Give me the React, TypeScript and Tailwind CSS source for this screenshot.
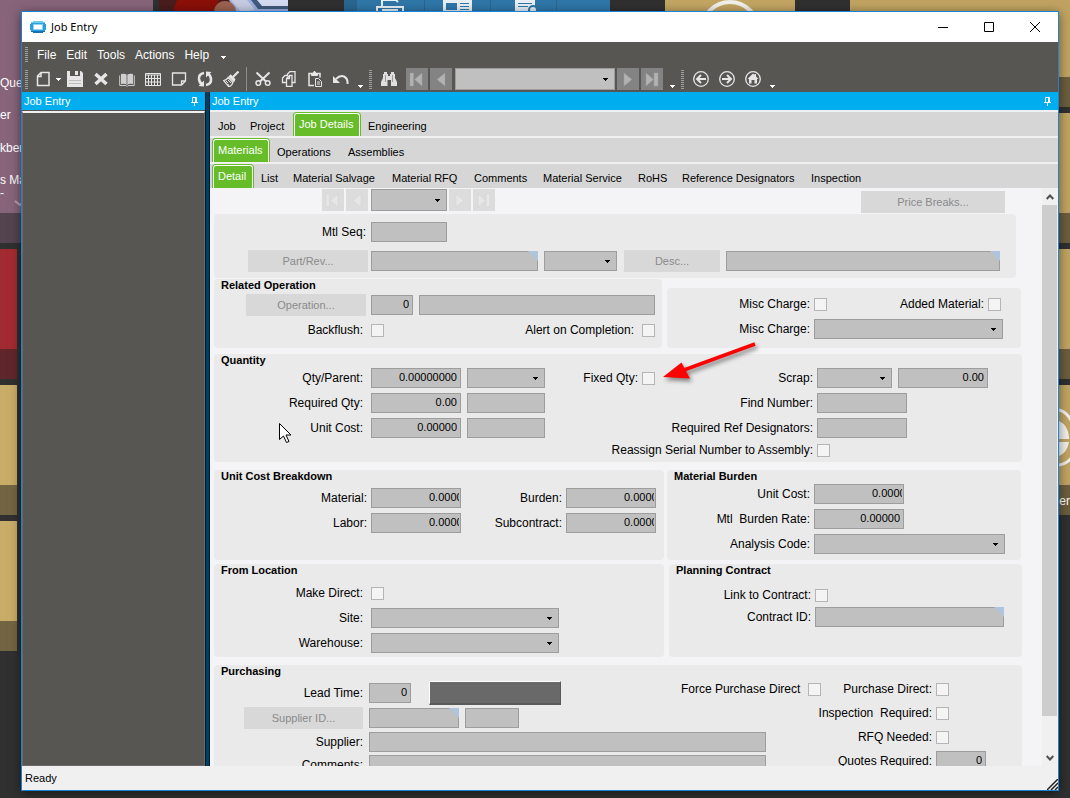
import type { ReactNode } from "react";
import clsx from "clsx";

const mainTabs = [
  { label: "Job", width: "w-[32px]" },
  { label: "Project", width: "w-[50px]" },
  { label: "Job Details", width: "w-[68px]", active: true },
  { label: "Engineering", width: "w-[78px]" },
];

const detailTabs = [
  { label: "Materials", width: "w-[58px]", active: true },
  { label: "Operations", width: "w-[71px]" },
  { label: "Assemblies", width: "w-[72px]" },
];

const materialTabs = [
  { label: "Detail", width: "w-[42px]", active: true },
  { label: "List", width: "w-[32px]" },
  { label: "Material Salvage", width: "w-[99px]" },
  { label: "Material RFQ", width: "w-[82px]" },
  { label: "Comments", width: "w-[69px]" },
  { label: "Material Service", width: "w-[95px]" },
  { label: "RoHS", width: "w-[44px]" },
  { label: "Reference Designators", width: "w-[129px]" },
  { label: "Inspection", width: "w-[70px]" },
];

type Tab = { label: string; width: string; active?: boolean };

function TabRow({ tabs, first }: { tabs: Tab[]; first?: boolean }) {
  return (
    <div
      role="tablist"
      className={clsx("mt-[2px] flex h-6 shrink-0 bg-[#d6d6d6]", first ? "pl-px" : "pl-[2px]")}
    >
      {tabs.map((t) => (
        <button
          key={t.label}
          role="tab"
          aria-selected={!!t.active}
          className={clsx(
            "h-full shrink-0 whitespace-nowrap text-left text-[11px]",
            t.width,
            t.active
              ? "rounded-t-[4px] bg-[#66bc29] px-px pt-px text-white"
              : "pl-[7px] pt-1 text-black"
          )}
        >
          {t.active ? (
            <span className="block h-full rounded-t-[3px] border border-b-0 border-white pl-[4px] leading-[20px]">
              {t.label}
            </span>
          ) : (
            t.label
          )}
        </button>
      ))}
    </div>
  );
}

function Group({ title, className, body, children }: {
  title?: string;
  className?: string;
  body?: string;
  children: ReactNode;
}) {
  return (
    <section className={clsx("relative rounded-[4px] bg-[#eaeaea]", className)}>
      {title && <h2 className="h-[13px] pl-[7px] text-[11px] font-bold leading-[13px]">{title}</h2>}
      <div className={body}>{children}</div>
    </section>
  );
}

const box = "border border-[#9d9d9d] bg-[#c0c0c0] text-[11px] text-black outline-none";

function Text({ name, className, value = "", search, cut }: {
  name?: string;
  className: string;
  value?: string;
  search?: boolean;
  cut?: boolean;
}) {
  return (
    <span className={clsx("relative block h-5 shrink-0", className)}>
      <input
        type="text"
        aria-label={name}
        defaultValue={value}
        className={clsx(box, "block h-full w-full pb-[3px]", cut ? "pl-[57px] pr-px text-left" : "pl-px pr-[3px] text-right")}
      />
      {search && (
        <svg className="absolute right-0 top-0" width="10" height="10" aria-hidden="true">
          <path d="M0 0h10v10z" fill="#b0c4de" />
        </svg>
      )}
    </span>
  );
}

function Combo({ name, className, height = "h-5" }: { name?: string; className: string; height?: string }) {
  return (
    <span className={clsx("relative block shrink-0", height, className)}>
      <select aria-label={name} className={clsx(box, "block h-full w-full appearance-none")} />
      <svg className="pointer-events-none absolute right-[7px] top-1/2 -mt-px" width="5" height="3" aria-hidden="true">
        <path d="M0 0h5v1H4v1H3v1H2V2H1V1H0z" fill="#000" />
      </svg>
    </span>
  );
}

function Check() {
  return (
    <input
      type="checkbox"
      className="size-[13px] shrink-0 appearance-none border border-[#b5b5b5] bg-[#f4f4f4] checked:bg-[#66bc29]"
    />
  );
}

// label text right-aligned in a column of its own, control after it
function Field({ label, labelWidth = "w-[149px]", gap = "gap-2", className, children }: {
  label: string;
  labelWidth?: string;
  gap?: string;
  className?: string;
  children: ReactNode;
}) {
  return (
    <label className={clsx("flex h-5 items-center", gap, className)}>
      <span className={clsx("shrink-0 whitespace-pre text-right", labelWidth)}>{label}</span>
      {children}
    </label>
  );
}

function GreyButton({ className, children }: { className: string; children: ReactNode }) {
  return (
    <button disabled className={clsx("h-[22px] shrink-0 bg-[#d8d8d8] text-[11px] text-[#8a8a8a]", className)}>
      {children}
    </button>
  );
}

const navPaths: Record<string, string> = {
  First: "M4 5h3.500v13H4zM16 5v13L8.500 11.500z",
  Previous: "M15 5v13L7 11.500z",
  Next: "M7 5v13l8-6.500z",
  Last: "M5 5v13l7.500-6.500zM13 5h4v13h-4z",
};

function NavButton({ kind, dark }: { kind: string; dark?: boolean }) {
  return (
    <button
      type="button"
      aria-label={kind}
      className={clsx("size-[22px] shrink-0", dark ? "bg-[#838383]" : "bg-[#dcdcdc]")}
    >
      <svg width="22" height="22" aria-hidden="true">
        <path d={navPaths[kind]} fill={dark ? "#b2b2b2" : "#e6e6e6"} stroke={dark ? "#9c9c9c" : "#d2d2d2"} strokeWidth=".5" />
      </svg>
    </button>
  );
}

function Gripper() {
  return (
    <svg width="3" height="19" className="shrink-0" aria-hidden="true">
      <path d="M1.5 0v19" stroke="#a0a0a0" strokeWidth="3" strokeDasharray="1 1" />
    </svg>
  );
}

function More({ className }: { className?: string }) {
  return (
    <svg width="5" height="3" className={clsx("shrink-0", className)} aria-hidden="true">
      <path d="M0 0h5v1H4v1H3v1H2V2H1V1H0z" fill="#fff" />
    </svg>
  );
}

function Tool({ name, children }: { name: string; children: ReactNode }) {
  return (
    <button aria-label={name} className="flex h-6 w-[26px] shrink-0 items-center justify-center">
      <svg width="16" height="16" viewBox="0 0 16 16" fill="none" stroke="#e6e6e6" aria-hidden="true">
        {children}
      </svg>
    </button>
  );
}

function Pin() {
  return (
    <svg width="7" height="9" viewBox="0 0 7 9" fill="none" stroke="#fff" aria-hidden="true">
      <path d="M1.5 5V.5h4V5M4.5 1v4M0 5.5h7M3.5 5v4" />
    </svg>
  );
}

function PanelHeader({ className }: { className?: string }) {
  return (
    <div className={clsx("flex h-[18px] shrink-0 items-center justify-between bg-[#00adef] pl-[2px] text-[11px] text-white", className)}>
      Job Entry
      <button aria-label="Pin panel">
        <Pin />
      </button>
    </div>
  );
}

function Tile({ className, band }: { className: string; band: string }) {
  return (
    <div className={clsx("absolute flex h-[130px] flex-col justify-end", className)}>
      <div className={clsx("h-[30px]", band)} />
    </div>
  );
}

function Desktop() {
  return (
    <div className="absolute inset-0 overflow-hidden text-[12px] text-white" aria-hidden="true">
      <div className="absolute left-0 top-0 h-[213px] w-[153px] bg-[#87647a]" />
      <div className="absolute left-0 top-[213px] h-[30px] w-[153px] bg-[#534450]" />
      <div className="absolute left-0 top-[75px] whitespace-nowrap">Que</div>
      <div className="absolute left-0 top-[107px] whitespace-nowrap">er</div>
      <div className="absolute left-0 top-[140px] whitespace-nowrap">kber</div>
      <div className="absolute left-0 top-[172px] whitespace-nowrap">s Ma</div>
      <div className="absolute left-0 top-[185px]">-</div>
      <svg className="absolute left-[14px] top-[200px]" width="12" height="8">
        <path d="M1 1l5 4 5-4" fill="none" stroke="#b9a5b2" strokeWidth="2" />
      </svg>
      <Tile className="left-0 top-[249px] w-[17px] bg-[#a22b31]" band="bg-[#60272b]" />
      <Tile className="left-0 top-[385px] w-[17px] bg-[#c8ac67]" band="bg-[#736543]" />
      <Tile className="left-0 top-[521px] w-[17px] bg-[#c8ac67]" band="bg-[#736543]" />

      <svg className="absolute left-[159px] top-0" width="129" height="12">
        <path d="M0 0h129v12H0z" fill="#4a1d1c" />
        <path d="M18 0h42l-6 12H14z" fill="#8a1008" />
        <path d="M70 0h59v12H76z" fill="#9fb0de" />
        <path d="M92 0h37v9h-30z" fill="#41597c" />
        <path d="M98 0h31v6h-26z" fill="#d5dcf2" />
        <path d="M72 0h16l8 10-14 2z" fill="#c6cbe2" />
        <circle cx="66" cy="12" r="11" fill="#9c6250" />
      </svg>
      <svg className="absolute left-[344px] top-0" width="266" height="12">
        <path d="M0 0h266v12H0z" fill="#2f77a8" />
        <path d="M0 0h13v12H0zM80 0h1v12h-1zM146 0h1v12h-1zM212 0h1v12h-1z" fill="#2a6690" />
        <path d="M38 7V0h14l2 2M33 12V7h26v5M38 10h16" fill="none" stroke="#e8f0f6" strokeWidth="2" />
        <path d="M99 0h29v12H99z" fill="#e8f0f6" />
        <path d="M102 3h11v7h-11zM116 3h9v1h-9zM116 6h9v1h-9zM116 9h9v1h-9z" fill="#2f77a8" />
        <path d="M171 0h20v12h-20z" fill="#e8f0f6" />
        <path d="M174 3h14v1h-14zM174 6h10v1h-10z" fill="#2f77a8" />
        <circle cx="189" cy="10" r="4" fill="#e8f0f6" stroke="#2f77a8" strokeWidth="2" />
      </svg>
      <div className="absolute left-[665px] top-0 h-3 w-[130px] bg-[#c2a562]" />
      <svg className="absolute left-[700px] top-0" width="60" height="12">
        <circle cx="30" cy="30" r="28" fill="none" stroke="#f2f0ea" strokeWidth="4" />
      </svg>
      <div className="absolute right-0 top-0 h-[77px] w-[220px] bg-[#c0a361]" />
      <div className="absolute right-0 top-[77px] h-[30px] w-[220px] bg-[#6b5e3d]" />
      <Tile className="right-0 top-[113px] w-[11px] bg-[#c0a361]" band="bg-[#6b5e3d]" />
      <Tile className="right-0 top-[249px] w-[11px] bg-[#c0a361]" band="bg-[#6b5e3d]" />
      <Tile className="right-0 top-[385px] w-[11px] bg-[#c0a361]" band="bg-[#6b5e3d]" />
      <svg className="absolute right-0 top-[405px]" width="11" height="66">
        <path d="M0 5q8 2 13 12M0 60q8-1 13-8" fill="none" stroke="#f2f0ea" strokeWidth="3" />
        <path d="M0 16q9 4 10 16v2H0zM0 37h10q-2 11-10 14z" fill="#f2f0ea" />
      </svg>
      <div className="absolute right-0 top-[493px] whitespace-nowrap">er</div>
    </div>
  );
}

function TitleBar() {
  return (
    <header className="flex h-[30px] shrink-0 items-center bg-white pl-2">
      <svg width="16" height="14" viewBox="0 0 16 14" aria-hidden="true">
        <path d="M3 1h10v1h2v2h1v6h-1v2h-2v1H3v-1H1v-2H0V4h1V2h2z" fill="#2a9fdc" />
        <path d="M3 1h10v1h2v1H1V2h2z" fill="#6ccbf2" />
        <path d="M1 11h14v1h-2v1H3v-1H1z" fill="#1670b4" />
        <path d="M3.500 4.500h9v5h-9z" fill="#fff" stroke="#8fd4f3" />
      </svg>
      <h1 className="ml-[5px] font-['Noto_Sans','Open_Sans',sans-serif] text-[11px]">Job Entry</h1>
      <div className="ml-auto flex h-full">
        <button aria-label="Minimize" className="flex w-[46px] items-center justify-center">
          <svg width="10" height="10"><path d="M0 5.5h10" stroke="#000" /></svg>
        </button>
        <button aria-label="Maximize" className="flex w-[46px] items-center justify-center">
          <svg width="10" height="10"><path d="M.5.5h9v9h-9z" fill="none" stroke="#000" /></svg>
        </button>
        <button aria-label="Close" className="flex w-[46px] items-center justify-center">
          <svg width="10" height="10"><path d="M0 0l10 10M10 0L0 10" stroke="#000" /></svg>
        </button>
      </div>
    </header>
  );
}

function Menu() {
  return (
    <nav className="flex h-[25px] shrink-0 items-center pl-[3px] text-white">
      <svg width="3" height="15" className="mr-[9px]" aria-hidden="true">
        <path d="M1.5 0v15" stroke="#a0a0a0" strokeWidth="3" strokeDasharray="1 1" />
      </svg>
      <div className="flex gap-[10px]">
        {["File", "Edit", "Tools", "Actions", "Help"].map((m) => (
          <button key={m}>{m}</button>
        ))}
      </div>
      <More className="ml-3 mt-[6px]" />
    </nav>
  );
}

function Toolbar() {
  return (
    <div className="flex h-[25px] shrink-0 items-center pb-px pl-[3px]">
      <Gripper />
      <div className="ml-[2px] flex items-center">
        <Tool name="New">
          <path d="M6 1.5h8v13H2.500V5zM6 2v3.500H3" strokeWidth="1.500" />
        </Tool>
        <More />
        <span className="w-px" />
        <Tool name="Save">
          <path d="M0 0h3v5h10V0h1l2 2v14H0z" fill="#e6e6e6" stroke="none" />
          <path d="M8 0h3v4H8z" fill="#e6e6e6" stroke="none" />
          <path d="M2 9.500h12M2 12.500h12" stroke="#bdbdbd" />
        </Tool>
        <Tool name="Delete">
          <path d="M2.500 3l11 10M13.500 3l-11 10" strokeWidth="3.500" />
        </Tool>
        <Tool name="Book">
          <path d="M2 3q4-1 6 1 2-2 6-1v10q-4-1-6 1-2-2-6-1z" fill="#cfcfcf" stroke="none" />
          <path d="M.7 4.500v10H7l1 1 1-1h6.300v-10M8 4v10" stroke="#cfcfcf" />
          <path d="M8 4v10" stroke="#777" />
        </Tool>
        <Tool name="Calendar">
          <path d="M.5 2.500h15v12H.5zM.5 4h15M.5 7.500h15M.5 11h15M3.500 4v10M6.500 4v10M9.500 4v10M12.500 4v10" />
        </Tool>
        <Tool name="Memo">
          <path d="M1.500 2h13v8l-4 4h-9zM14.500 10h-4v4" strokeWidth="1.300" />
        </Tool>
        <Tool name="Refresh">
          <path d="M7 2Q1.500 3 2 8q.5 4 3 5M9 14q5.500-1 5-6-.5-4-3-5" strokeWidth="2.600" />
          <path d="M1.500 15l5.500.5V9.500zM14.500 1L9 .5v6z" fill="#e6e6e6" stroke="none" />
        </Tool>
        <Tool name="Clear">
          <path d="M15.500.5L10 6" strokeWidth="2.200" />
          <path d="M7 4l5 5M6 5l5.500 5.500" strokeWidth="1.800" />
          <path d="M5 6.500l5 5q-1 3-4 4.500L.5 9.500Q4 9 5 6.500z" strokeWidth="1.200" />
          <path d="M3 10l2 2M5 9l3 3M5 13l1 2" />
        </Tool>
        <span className="ml-[2px] mr-[3px] h-6 w-px bg-[#8d8d8d]" />
        <Tool name="Cut">
          <path d="M1.500 1.500l9.500 9M14.500 1.500L5 10.500" strokeWidth="2" />
          <circle cx="3.300" cy="12" r="2.300" strokeWidth="1.500" />
          <circle cx="12.700" cy="12" r="2.300" strokeWidth="1.500" />
        </Tool>
        <Tool name="Copy">
          <path d="M5.500 11.500h-4V7L4 4.500h3M6.500 4.500V3L9 .5h5v11h-3" strokeWidth="1.300" />
          <path d="M8.500 4.500L5.500 7.500v8H11v-11zM8.500 4.500v3h-3" strokeWidth="1.300" />
        </Tool>
        <Tool name="Paste">
          <path d="M7 14.500H2v-12h11v4" strokeWidth="1.500" />
          <path d="M4.500 4.500v-2H6l1-2h1l1 2h1.500v2z" fill="#e6e6e6" />
          <path d="M8.500 7.500h3l3 3v5h-6zM10 11h3M10 13h3" />
        </Tool>
        <Tool name="Undo">
          <path d="M3 8q4-4 8-2.500 4 2 3.500 7.500" strokeWidth="2" />
          <path d="M0 5v7h7z" fill="#e6e6e6" stroke="none" />
        </Tool>
      </div>
      <More className="ml-1 mt-[14px]" />
      <span className="w-[6px]" />
      <Gripper />
      <span className="w-1" />
      <Tool name="Find">
        <path d="M3 1h3v2h1v2h2V3h1V1h3v2h1v4l2 4v4h-6V9H6.500v6H0v-4l2-4V3h1z" fill="#e0e0e0" stroke="none" />
        <path d="M4.500 4v7M11.500 4v7" stroke="#9a9a9a" />
      </Tool>
      <div className="ml-1 flex gap-[2px]">
        <NavButton kind="First" dark />
        <NavButton kind="Previous" dark />
      </div>
      <Combo name="Record" className="ml-[3px] mr-[2px] w-[160px]" height="h-[22px]" />
      <div className="flex gap-[2px]">
        <NavButton kind="Next" dark />
        <NavButton kind="Last" dark />
      </div>
      <More className="ml-[7px] mt-[14px]" />
      <span className="w-[6px]" />
      <Gripper />
      <span className="w-1" />
      <Tool name="Back">
        <circle cx="8" cy="8" r="7.300" strokeWidth="1.300" />
        <path d="M13 8H5M8 4L4 8l4 4" strokeWidth="2" />
      </Tool>
      <Tool name="Forward">
        <circle cx="8" cy="8" r="7.300" strokeWidth="1.300" />
        <path d="M3 8h8M8 4l4 4-4 4" strokeWidth="2" />
      </Tool>
      <Tool name="Home">
        <circle cx="8" cy="8" r="7.300" strokeWidth="1.300" />
        <path d="M8 2.500l1.500 1.500V3H11v2.500l2.500 2.500H12v4.500H9.500V9h-3v3.500H4V8H2.500z" fill="#e6e6e6" stroke="none" />
      </Tool>
      <More className="ml-1 mt-[14px]" />
    </div>
  );
}

function ScrollBar() {
  return (
    <div className="flex w-4 shrink-0 flex-col bg-[#f0f0f0] pr-px">
      <button aria-label="Scroll up" className="flex h-[17px] items-center justify-center">
        <svg width="8" height="6"><path d="M.7 5L4 1.500 7.300 5" fill="none" stroke="#505050" strokeWidth="2" /></svg>
      </button>
      <div className="flex-1">
        <div className="h-[94%] bg-[#cdcdcd]" />
      </div>
      <button aria-label="Scroll down" className="flex h-[17px] items-center justify-center">
        <svg width="8" height="6"><path d="M.7 1L4 4.500 7.300 1" fill="none" stroke="#505050" strokeWidth="2" /></svg>
      </button>
    </div>
  );
}

function Form() {
  return (
    <form className="min-w-0 flex-1 overflow-hidden pl-1 pr-5 pt-px">
      <div className="flex h-[25px] items-start pl-[108px] pr-[17px]">
        <div className="flex gap-[2px]">
          <NavButton kind="First" />
          <NavButton kind="Previous" />
        </div>
        <Combo name="Material" className="ml-[3px] mr-[2px] w-[76px]" height="h-[22px]" />
        <div className="flex gap-[2px]">
          <NavButton kind="Next" />
          <NavButton kind="Last" />
        </div>
        <GreyButton className="ml-auto mt-[2px] w-[144px]">Price Breaks...</GreyButton>
      </div>

      <Group className="mr-[6px] h-16" body="flex flex-col gap-2 pr-4 pt-2">
        <Field label="Mtl Seq:" labelWidth="w-[152px]" gap="gap-[5px]">
          <Text className="w-[76px]" />
        </Field>
        <div className="flex items-center pl-[34px]">
          <GreyButton className="mr-[3px] w-[120px]">Part/Rev...</GreyButton>
          <Text name="Part" className="w-[167px]" search />
          <Combo name="Revision" className="ml-[6px] mr-[7px] w-[73px]" />
          <GreyButton className="mr-[6px] w-[96px]">Desc...</GreyButton>
          <Text name="Description" className="min-w-0 flex-1" search />
        </div>
      </Group>

      <div className="mr-px mt-px grid grid-cols-[448fr_354fr] items-end gap-[5px]">
        <Group title="Related Operation" className="h-[69px]" body="pr-[7px]">
          <div className="mt-[2px] flex items-center pl-8">
            <GreyButton className="mr-[5px] w-[120px]">Operation...</GreyButton>
            <Text name="Operation" className="mr-[6px] w-[42px]" value="0" />
            <Text name="Operation description" className="min-w-0 flex-1" />
          </div>
          <div className="mt-1 flex justify-between">
            <Field label="Backflush:"><Check /></Field>
            <Field label="Alert on Completion:" labelWidth=""><Check /></Field>
          </div>
        </Group>
        <Group className="h-[60px]" body="flex flex-col gap-[5px] pr-[18px] pt-[6px]">
          <div className="flex justify-between">
            <Field label="Misc Charge:" labelWidth="w-[143px]" gap="gap-1"><Check /></Field>
            <Field label="Added Material:" labelWidth="" gap="gap-1" className="mr-[2px]"><Check /></Field>
          </div>
          <Field label="Misc Charge:" labelWidth="w-[143px]" gap="gap-1">
            <Combo className="min-w-0 flex-1" />
          </Field>
        </Group>
      </div>

      <Group title="Quantity" className="mt-[6px] h-[108px]" body="mt-px flex flex-col gap-[5px]">
        <div className="flex">
          <Field label="Qty/Parent:"><Text className="w-[90px]" value="0.00000000" /></Field>
          <Combo name="Quantity unit" className="ml-[6px] w-[78px]" />
          <Field label="Fixed Qty:" labelWidth="w-[93px]" gap="gap-1"><Check /></Field>
          <Field label="Scrap:" labelWidth="" gap="gap-1" className="ml-auto"><Combo className="w-[75px]" /></Field>
          <Text name="Scrap amount" className="ml-[6px] mr-[34px] w-[90px]" value="0.00" />
        </div>
        <div className="flex">
          <Field label="Required Qty:"><Text className="w-[90px]" value="0.00" /></Field>
          <Text name="Required unit" className="ml-[6px] w-[78px]" />
          <Field label="Find Number:" labelWidth="" gap="gap-1" className="ml-auto mr-[115px]"><Text className="w-[90px]" /></Field>
        </div>
        <div className="flex">
          <Field label="Unit Cost:"><Text className="w-[90px]" value="0.00000" /></Field>
          <Text name="Cost unit" className="ml-[6px] w-[78px]" />
          <Field label="Required Ref Designators:" labelWidth="" gap="gap-1" className="ml-auto mr-[115px]">
            <Text className="w-[90px]" />
          </Field>
        </div>
        <Field label="Reassign Serial Number to Assembly:" labelWidth="" gap="gap-1" className="-mt-[3px] ml-auto mr-[192px]">
          <Check />
        </Field>

        {/* pointer and callout lie over the form */}
        <svg className="pointer-events-none absolute left-[65px] top-[69px]" width="13" height="22" aria-hidden="true">
          <path d="M.5.5v16l4-3.500 3 6.500 2.500-1-3-6.500h5z" fill="#fff" stroke="#000" />
        </svg>
        <svg className="pointer-events-none absolute -top-4 left-[446px] drop-shadow-[2px_3px_2px_rgba(0,0,0,0.45)]" width="100" height="48" aria-hidden="true">
          <path d="M3 39L21.500 24.500 30 40.500z" fill="#fe0000" />
          <path d="M95 6L24 32" stroke="#fe0000" strokeWidth="3.500" />
        </svg>
      </Group>

      <div className="mr-px mt-2 grid grid-cols-[450fr_354fr] gap-[3px]">
        <Group title="Unit Cost Breakdown" className="h-[90px]" body="mt-[5px] flex flex-col gap-[5px] pr-2">
          <div className="flex justify-between">
            <Field label="Material:" labelWidth="w-[153px]" gap="gap-1"><Text className="w-[90px]" value="0.00000" cut /></Field>
            <Field label="Burden:" labelWidth="" gap="gap-1"><Text className="w-[90px]" value="0.00000" cut /></Field>
          </div>
          <div className="flex justify-between">
            <Field label="Labor:" labelWidth="w-[153px]" gap="gap-1"><Text className="w-[90px]" value="0.00000" cut /></Field>
            <Field label="Subcontract:" labelWidth="" gap="gap-1"><Text className="w-[90px]" value="0.00000" cut /></Field>
          </div>
        </Group>
        <Group title="Material Burden" className="h-[90px]" body="mt-px flex flex-col gap-[5px] pr-4">
          <Field label="Unit Cost:" labelWidth="w-[143px]" gap="gap-1"><Text className="w-[90px]" value="0.00000" cut /></Field>
          <Field label="Mtl  Burden Rate:" labelWidth="w-[143px]" gap="gap-1"><Text className="w-[90px]" value="0.00000" /></Field>
          <Field label="Analysis Code:" labelWidth="w-[143px]" gap="gap-1"><Combo className="min-w-0 flex-1" /></Field>
        </Group>
      </div>

      <div className="mt-1 grid grid-cols-[450fr_353fr] gap-[5px]">
        <Group title="From Location" className="h-[93px]" body="mt-[6px] flex flex-col gap-[5px]">
          <Field label="Make Direct:"><Check /></Field>
          <Field label="Site:"><Combo className="w-[188px]" /></Field>
          <Field label="Warehouse:"><Combo className="w-[188px]" /></Field>
        </Group>
        <Group title="Planning Contract" className="h-[93px]" body="mt-2 flex flex-col gap-[2px] pr-[18px]">
          <Field label="Link to Contract:" labelWidth="w-[142px]" gap="gap-1"><Check /></Field>
          <Field label="Contract ID:" labelWidth="w-[142px]" gap="gap-1"><Text className="min-w-0 flex-1" search /></Field>
        </Group>
      </div>

      <Group title="Purchasing" className="mt-2" body="flex justify-between pb-2 pr-9">
        <div className="mt-[3px] flex flex-col gap-[3px]">
          <div className="flex items-center">
            <Field label="Lead Time:" gap="gap-[6px]"><Text className="w-[42px]" value="0" /></Field>
            <div className="ml-[18px] h-6 w-[132px] border border-b-2 border-[#5a5a5a] border-l-[#fff] border-t-[#fff] bg-[#696969]" />
          </div>
          <div className="-mt-px flex items-center pl-[30px]">
            <GreyButton className="mr-[6px] w-[119px]">Supplier ID...</GreyButton>
            <Text name="Supplier ID" className="mr-[6px] w-[90px]" search />
            <Text name="Supplier site" className="w-[54px]" />
          </div>
          <Field label="Supplier:" gap="gap-[6px]"><Text className="w-[397px]" /></Field>
          <Field label="Comments:" gap="gap-[6px]"><Text className="w-[397px]" /></Field>
        </div>
        <div className="-ml-[100px] mt-px flex flex-col gap-1">
          <div className="flex justify-end">
            <Field label="Force Purchase Direct" labelWidth="" className="mr-[22px]"><Check /></Field>
            <Field label="Purchase Direct:" labelWidth="" gap="gap-1" className="mr-[37px]"><Check /></Field>
          </div>
          <Field label="Inspection  Required:" labelWidth="" gap="gap-1" className="mr-[37px] justify-end"><Check /></Field>
          <Field label="RFQ Needed:" labelWidth="" gap="gap-1" className="mr-[37px] justify-end"><Check /></Field>
          <Field label="Quotes Required:" labelWidth="" gap="gap-1" className="justify-end"><Text className="w-[50px]" value="0" /></Field>
        </div>
      </Group>
    </form>
  );
}

export default function App() {
  return (
    <div className="relative flex h-screen overflow-hidden bg-[#303030] pb-[7px] pl-[21px] pr-[11px] pt-[11px] font-['Liberation_Sans',Arial,sans-serif] text-[12px] leading-4 text-black">
      <Desktop />
      <main className="relative flex min-w-0 flex-1 flex-col border border-[#1883d7] bg-[#575653] shadow-[0_2px_10px_rgba(0,0,0,0.5)]">
        <TitleBar />
        <Menu />
        <Toolbar />
        <div className="flex min-h-0 flex-1">
          <aside className="flex w-[183px] shrink-0 flex-col">
            <PanelHeader className="pr-[7px]" />
            <div className="mt-px flex-1 border border-t-2 border-[#6b6966] border-t-[#f0f0f0]" />
          </aside>
          <div className="w-[5px] shrink-0 border-x border-[#001a2c] bg-[#003f63]" />
          <div className="flex min-w-0 flex-1 flex-col bg-[#f0f0f0]">
            <PanelHeader className="pr-[7px]" />
            <TabRow tabs={mainTabs} first />
            <TabRow tabs={detailTabs} />
            <TabRow tabs={materialTabs} />
            <div className="flex min-h-0 flex-1 bg-[#f4f4f6]">
              <Form />
              <ScrollBar />
            </div>
          </div>
        </div>
        <footer className="relative flex h-6 shrink-0 items-center bg-[#f0f0f0] pl-[3px] text-[11px]">
          Ready
          <svg className="absolute bottom-0 right-0" width="11" height="11" aria-hidden="true">
            <path d="M0 11L11 0M4 11l7-7M8 11l3-3" stroke="#222" strokeWidth="1.500" />
          </svg>
        </footer>
      </main>
    </div>
  );
}
